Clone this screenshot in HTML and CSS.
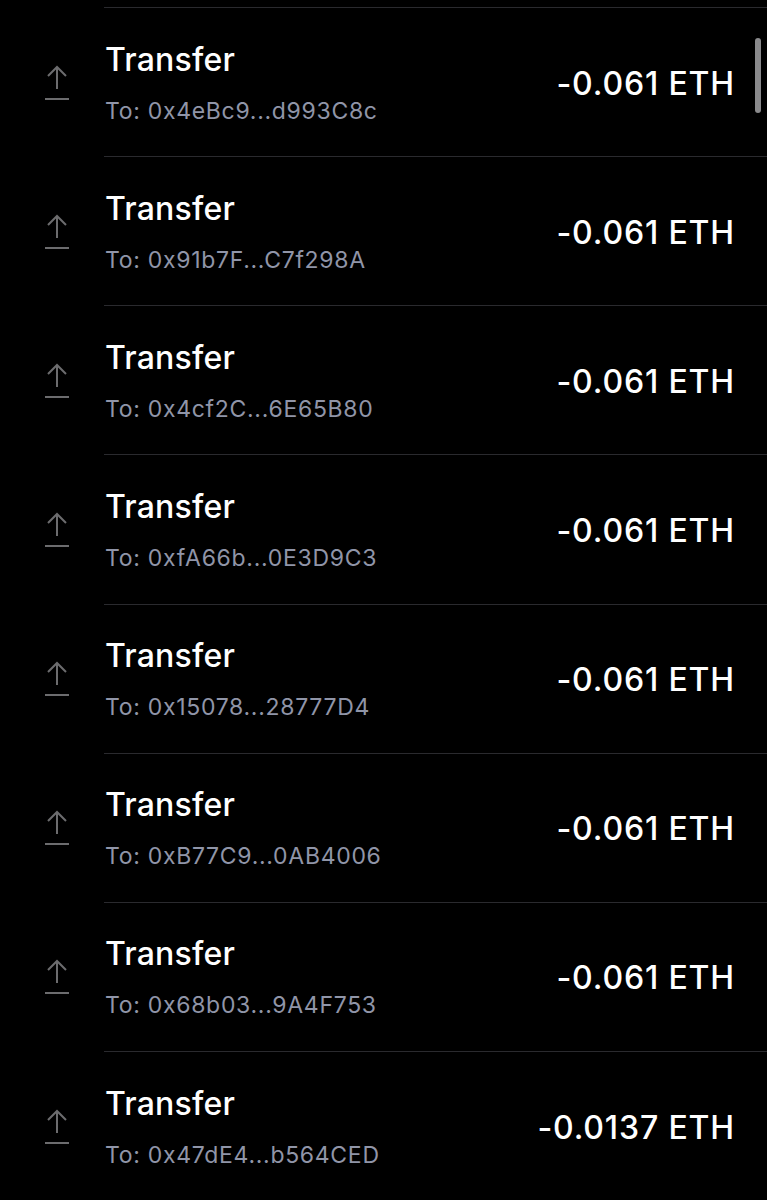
FILE: index.html
```html
<!DOCTYPE html>
<html lang="en">
  <head>
    <meta charset="UTF-8" />
    <meta name="viewport" content="width=device-width, initial-scale=1.0" />
    <title>Activity</title>
    <link rel="stylesheet" href="styles.css">
  </head>
  <body>
    <div class="screen">
      <ul class="tx-list" id="txList"></ul>
      <div class="scroll-thumb"></div>
    </div>
    <script>
      var txs = [
        { to: "0x4eBc9...d993C8c", amount: "-0.061 ETH" },
        { to: "0x91b7F...C7f298A", amount: "-0.061 ETH" },
        { to: "0x4cf2C...6E65B80", amount: "-0.061 ETH" },
        { to: "0xfA66b...0E3D9C3", amount: "-0.061 ETH" },
        { to: "0x15078...28777D4", amount: "-0.061 ETH" },
        { to: "0xB77C9...0AB4006", amount: "-0.061 ETH" },
        { to: "0x68b03...9A4F753", amount: "-0.061 ETH" },
        { to: "0x47dE4...b564CED", amount: "-0.0137 ETH" }
      ];

      var icon =
        '<svg width="26" height="36" viewBox="0 0 26 36" fill="none" stroke="#6c6c6e" stroke-width="2">' +
        '<path d="M13 2 V24" />' +
        '<path d="M4 11 L13 2 L22 11" stroke-linejoin="miter" />' +
        '<path d="M1 34 H25" />' +
        "</svg>";

      var list = document.getElementById("txList");
      var html = "";
      for (var i = 0; i < txs.length; i++) {
        html +=
          '<li class="tx-row">' +
          '<div class="tx-icon">' + icon + "</div>" +
          '<div class="tx-body">' +
          '<div class="tx-info">' +
          '<div class="tx-title">Transfer</div>' +
          '<div class="tx-to">To: ' + txs[i].to + "</div>" +
          "</div>" +
          '<div class="tx-amount">' + txs[i].amount + "</div>" +
          "</div>" +
          "</li>";
      }
      list.innerHTML = html;
    </script>
  </body>
</html>
```
FILE: styles.css
```css
html,
body {
  margin: 0;
  padding: 0;
  background: #000000;
}

body {
  font-family: Inter, "Noto Sans", "Liberation Sans", sans-serif;
  color: #ffffff;
}

.screen {
  position: relative;
  width: 767px;
  height: 1200px;
  overflow: hidden;
  padding-top: 7px;
  box-sizing: border-box;
}

.tx-list {
  list-style: none;
  margin: 0;
  padding: 0;
}

.tx-row {
  display: flex;
  height: 149.15px;
}

.tx-icon {
  width: 104px;
  flex-shrink: 0;
  display: flex;
  align-items: center;
  padding-left: 44px;
  box-sizing: border-box;
}

.tx-icon svg {
  display: block;
  margin-top: 2px;
}

.tx-body {
  flex: 1;
  display: flex;
  align-items: center;
  justify-content: space-between;
  border-top: 1px solid #2a2a2e;
  padding: 0 32px 0 1px;
}

.tx-title {
  font-size: 32px;
  line-height: 38px;
  font-weight: 500;
  letter-spacing: 0.2px;
}

.tx-to {
  margin-top: 19px;
  font-size: 23px;
  line-height: 26px;
  color: #9095a8;
  letter-spacing: 0.7px;
}

.tx-amount {
  font-size: 32px;
  line-height: 38px;
  font-weight: 500;
  letter-spacing: 0.85px;
  margin-top: 3px;
}

.scroll-thumb {
  position: absolute;
  right: 6px;
  top: 38px;
  width: 6px;
  height: 75px;
  border-radius: 3px;
  background: #8a8a8c;
}
```
